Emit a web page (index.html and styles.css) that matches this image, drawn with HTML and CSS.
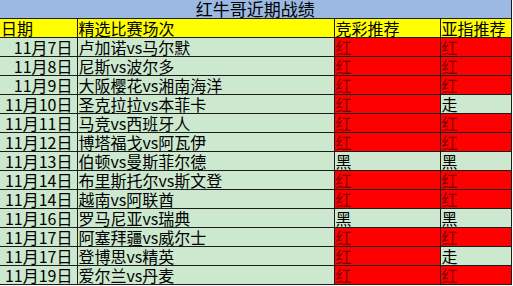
FILE: index.html
```html
<!DOCTYPE html>
<html lang="zh">
<head>
<meta charset="utf-8">
<link rel="stylesheet" href="styles.css">
</head>
<body>
<table class="sheet">
  <colgroup>
    <col class="c-date"><col class="c-match"><col class="c-jc"><col class="c-yz">
  </colgroup>
  <tr class="title"><td colspan="4">红牛哥近期战绩</td></tr>
  <tr class="head"><td>日期</td><td>精选比赛场次</td><td>竞彩推荐</td><td>亚指推荐</td></tr>
  <tr><td class="date">11月7日</td><td>卢加诺vs马尔默</td><td class="red">红</td><td class="red">红</td></tr>
  <tr><td class="date">11月8日</td><td>尼斯vs波尔多</td><td class="red">红</td><td class="red">红</td></tr>
  <tr><td class="date">11月9日</td><td>大阪樱花vs湘南海洋</td><td class="red">红</td><td class="red">红</td></tr>
  <tr><td class="date">11月10日</td><td>圣克拉拉vs本菲卡</td><td class="red">红</td><td>走</td></tr>
  <tr><td class="date">11月11日</td><td>马竞vs西班牙人</td><td class="red">红</td><td class="red">红</td></tr>
  <tr><td class="date">11月12日</td><td>博塔福戈vs阿瓦伊</td><td class="red">红</td><td class="red">红</td></tr>
  <tr><td class="date">11月13日</td><td>伯顿vs曼斯菲尔德</td><td>黑</td><td>黑</td></tr>
  <tr><td class="date">11月14日</td><td>布里斯托尔vs斯文登</td><td class="red">红</td><td class="red">红</td></tr>
  <tr><td class="date">11月14日</td><td>越南vs阿联酋</td><td class="red">红</td><td class="red">红</td></tr>
  <tr><td class="date">11月16日</td><td>罗马尼亚vs瑞典</td><td>黑</td><td>黑</td></tr>
  <tr><td class="date">11月17日</td><td>阿塞拜疆vs威尔士</td><td class="red">红</td><td class="red">红</td></tr>
  <tr><td class="date">11月17日</td><td>登博思vs精英</td><td class="red">红</td><td>走</td></tr>
  <tr><td class="date">11月19日</td><td>爱尔兰vs丹麦</td><td class="red">红</td><td class="red">红</td></tr>
</table>
</body>
</html>
```
FILE: styles.css
```css
html, body {
  margin: 0;
  padding: 0;
  background: #ffffff;
}
.sheet {
  border-collapse: collapse;
  table-layout: fixed;
  width: 511px;
  font-family: "Noto Sans CJK SC", "DejaVu Sans", sans-serif;
  font-size: 16px;
  color: #000;
}
.c-date { width: 77px; }
.c-match { width: 257px; }
.c-jc { width: 106px; }
.c-yz { width: 71px; }
.sheet td {
  height: 18px;
  padding: 0 1px;
  border: 1px solid #1c1c1c;
  line-height: 18px;
  white-space: nowrap;
  background: #cce8cf;
}
.sheet tr td:first-child { border-left: none; }
.sheet tr:first-child td { border-top: none; }
.title td {
  background: #9cb9e3;
  text-align: center;
  font-size: 17px;
  padding: 0;
}
.head td {
  background: #ffff00;
}
.sheet td.date {
  text-align: right;
  padding-right: 4px;
}
.sheet td.red {
  background: #ff0000;
  color: #7a0000;
}
```
